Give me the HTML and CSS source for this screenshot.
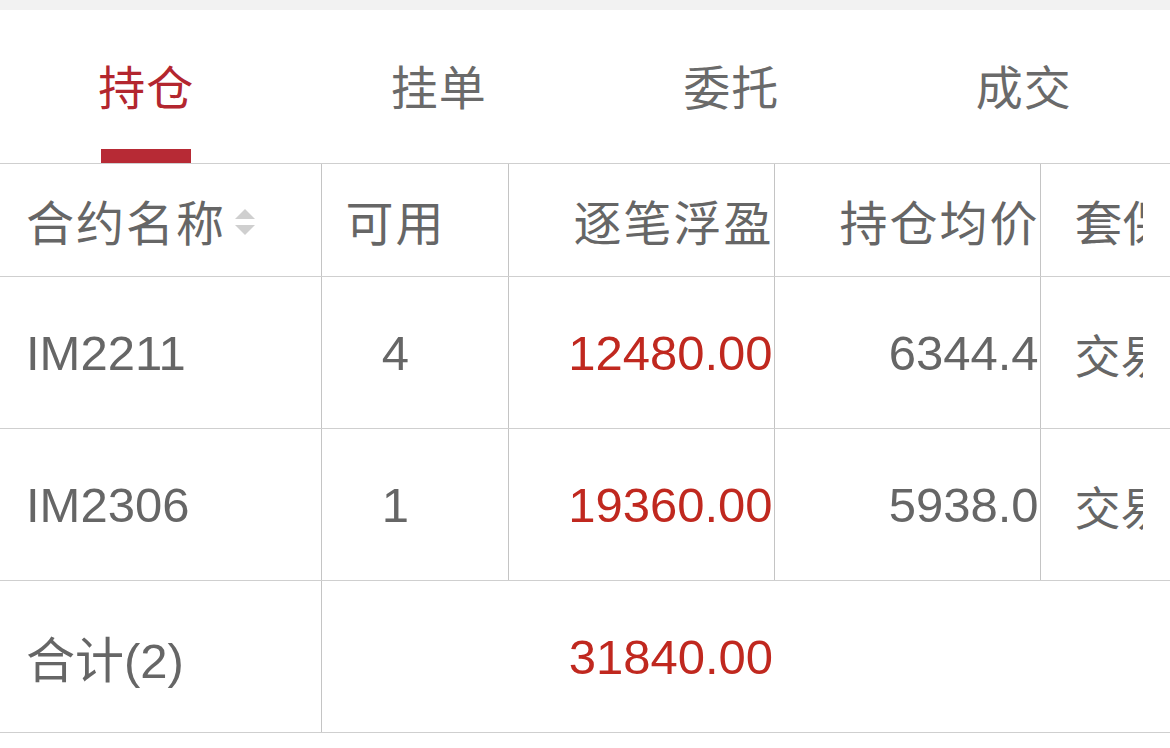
FILE: index.html
```html
<!DOCTYPE html>
<html lang="zh-CN">
<head>
<meta charset="utf-8">
<title>持仓</title>
<link rel="stylesheet" href="styles.css">
</head>
<body>
<div class="topstrip"></div>
<nav class="tabs">
  <div class="tab active"><span class="tab-label">持仓</span><span class="tab-bar"></span></div>
  <div class="tab"><span class="tab-label">挂单</span></div>
  <div class="tab"><span class="tab-label">委托</span></div>
  <div class="tab"><span class="tab-label">成交</span></div>
</nav>
<table class="grid">
  <colgroup>
    <col class="c1"><col class="c2"><col class="c3"><col class="c4"><col class="c5"><col class="c6">
  </colgroup>
  <thead>
    <tr class="head">
      <th class="name">合约名称<span class="sort"><svg width="22" height="28" viewBox="0 0 22 28"><path d="M11 1 L21 11 L1 11 Z" fill="#cfcfcf"/><path d="M1 17 L21 17 L11 27 Z" fill="#cfcfcf"/></svg></span></th>
      <th class="avail">可用</th>
      <th class="num">逐笔浮盈</th>
      <th class="num">持仓均价</th>
      <th class="hedge"><span class="clip">套保</span></th>
      <th class="pad"></th>
    </tr>
  </thead>
  <tbody>
    <tr class="row">
      <td class="name">IM2211</td>
      <td class="avail">4</td>
      <td class="num red">12480.00</td>
      <td class="num">6344.4</td>
      <td class="hedge"><span class="clip">交易</span></td>
      <td class="pad"></td>
    </tr>
    <tr class="row">
      <td class="name">IM2306</td>
      <td class="avail">1</td>
      <td class="num red">19360.00</td>
      <td class="num">5938.0</td>
      <td class="hedge"><span class="clip">交易</span></td>
      <td class="pad"></td>
    </tr>
    <tr class="row total">
      <td class="name">合计(2)</td>
      <td class="num red" colspan="2">31840.00</td>
      <td class="blank" colspan="3"></td>
    </tr>
  </tbody>
</table>
</body>
</html>
```
FILE: styles.css
```css
html, body {
  margin: 0;
  padding: 0;
  background: #ffffff;
  width: 1170px;
  height: 748px;
  overflow: hidden;
  font-family: "Liberation Sans", "Noto Sans CJK SC", sans-serif;
  color: #666666;
}

.topstrip {
  height: 10px;
  background: #f2f2f2;
}

.tabs {
  display: flex;
  height: 153px;
}

.tab {
  flex: 1;
  position: relative;
  display: flex;
  justify-content: center;
  padding-top: 48px;
  box-sizing: border-box;
}

.tab-label {
  font-family: "Noto Sans CJK SC", sans-serif;
  font-size: 47px;
  line-height: 54px;
  height: 54px;
  color: #6a6a6a;
  letter-spacing: 1px;
}

.tab.active .tab-label {
  color: #b3262f;
}

.tab-bar {
  position: absolute;
  left: 101px;
  bottom: 0;
  width: 90px;
  height: 14px;
  background: #b72a35;
}

.grid {
  width: 1170px;
  border-collapse: collapse;
  table-layout: fixed;
}

.c1 { width: 321px; }
.c2 { width: 187px; }
.c3 { width: 266px; }
.c4 { width: 266px; }
.c5 { width: 103px; }
.c6 { width: 27px; }

.grid th, .grid td {
  border-top: 1px solid #cfcfcf;
  border-bottom: 1px solid #cfcfcf;
  border-left: 1px solid #c4c4c4;
  padding: 0;
  white-space: nowrap;
  overflow: hidden;
  vertical-align: middle;
  font-weight: normal;
  color: #666666;
}

.grid th:first-child, .grid td:first-child {
  border-left: none;
}

.grid .pad {
  border-left: none;
}

.grid .blank {
  border-left: none;
}

.head th {
  height: 112px;
  font-family: "Noto Sans CJK SC", sans-serif;
  font-size: 48px;
  letter-spacing: 2px;
  line-height: 56px;
}

.head th > * {
  letter-spacing: 0;
}

.row td {
  height: 151px;
  font-size: 49px;
}

.name {
  text-align: left;
  padding-left: 26px !important;
}

.sort {
  display: inline-block;
  vertical-align: middle;
  margin-left: 8px;
  position: relative;
  top: -6px;
}

.sort svg {
  display: block;
}

.avail {
  text-align: center;
  padding-right: 38px !important;
}

.num {
  text-align: right;
  padding-right: 1px !important;
}

.head .num {
  padding-right: 0 !important;
  letter-spacing: 2px;
}

.hedge {
  text-align: left;
  padding-left: 34px !important;
  font-family: "Noto Sans CJK SC", sans-serif;
}

.clip {
  display: block;
  width: 68px;
  overflow: hidden;
  white-space: nowrap;
}

.row .hedge {
  font-size: 46px;
}

.total .name {
  font-family: "Liberation Sans", "Noto Sans CJK SC", sans-serif;
}

.red {
  color: #c0281f !important;
}
```
